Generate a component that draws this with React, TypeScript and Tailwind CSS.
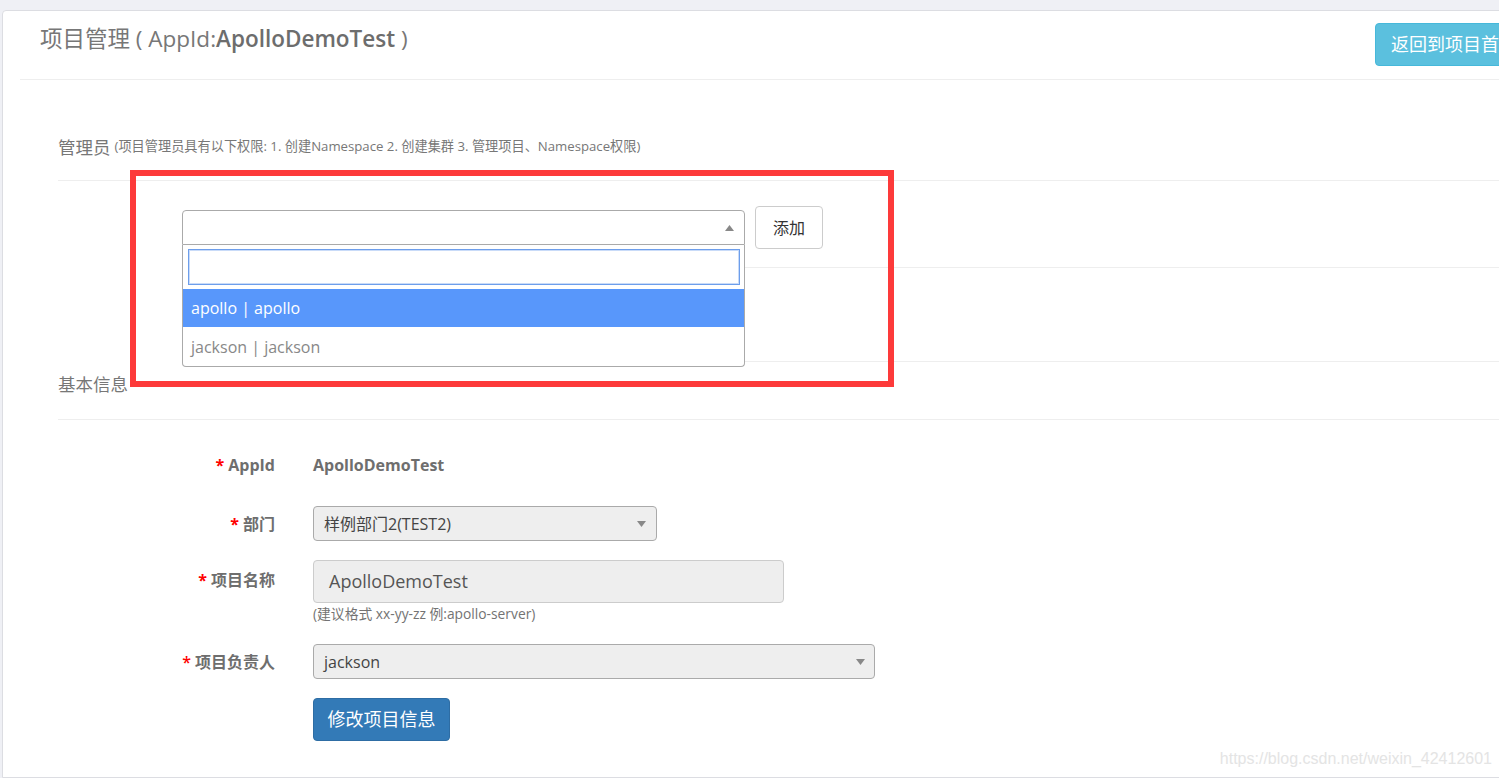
import React from "react";

const Caret = ({ up = false }: { up?: boolean }) => (
   <svg width="9" height="6" viewBox="0 0 9 6" className="shrink-0">
      {up ? (
         <path d="M0 6 L4.5 0 L9 6 Z" fill="#888" />
      ) : (
         <path d="M0 0 L9 0 L4.5 6 Z" fill="#888" />
      )}
   </svg>
);

function Label({ text, bold = true }: { text: string; bold?: boolean }) {
   return (
      <div
         className={`flex h-[22px] w-[217px] shrink-0 items-center justify-end text-[16px] text-[#6e6e6e] ${
            bold ? "font-bold" : "font-semibold"
         }`}
      >
         <span className="text-[#ff0000] mr-[4px]">*</span>
         {text}
      </div>
   );
}

export default function App() {
   return (
      <div className="relative h-screen w-full overflow-hidden bg-[#eff0f5] pt-[10px] pl-[2px] font-['Open_Sans','Noto_Sans_CJK_SC',sans-serif]">
         <div className="h-full w-[1580px] rounded-tl-[4px] border border-[#dcdde2] bg-white">
            {/* header */}
            <div className="ml-[17px] flex h-[69px] items-start border-b border-[#eeeeee] pl-[20px] pr-[46px]">
               <h1 className="mt-[12px] flex h-[32px] items-center whitespace-pre text-[22.5px] text-[#777]">
                  项目管理 ( AppId:
                  <span className="font-semibold text-[#6d6d6d]">ApolloDemoTest</span> )
               </h1>
               <div className="flex-1" />
               <button className="mt-[12px] h-[43px] w-[160px] rounded-[4px] border border-[#46b8da] bg-[#5bc0de] pl-[15px] text-left text-[18px] text-white">
                  返回到项目首页
               </button>
            </div>

            {/* 管理员 */}
            <div className="ml-[55px] border-b border-[#eeeeee] pt-[56px] pb-[22px] text-[#777]">
               <div className="flex h-[22px] items-center">
                  <span className="text-[17.5px]">管理员</span>
                  <span className="ml-[4px] text-[13.2px]">
                     (项目管理员具有以下权限: 1. 创建Namespace 2. 创建集群 3. 管理项目、Namespace权限)
                  </span>
               </div>
            </div>

            <div className="ml-[179px]">
               <div className="flex items-center gap-[10px] border-b border-[#eeeeee] pt-[25px] pb-[18px]">
                  <div className="relative">
                     <div className="flex h-[35px] w-[563px] items-center justify-end rounded-t-[4px] border border-[#aaa] bg-white pr-[10px]">
                        <Caret up />
                     </div>
                     <div className="absolute left-0 top-full z-10 w-[563px] rounded-b-[4px] border border-t-0 border-[#aaa] bg-white">
                        <div className="p-[4px] pl-[5px]">
                           <div className="h-[36px] w-full border border-[#6d9eeb] shadow-[inset_0_0_0_1px_#c9dbf8]" />
                        </div>
                        <div className="flex h-[38px] items-center bg-[#5897fb] pl-[8px] text-[16px] text-white">
                           apollo | apollo
                        </div>
                        <div className="flex h-[39px] items-center pl-[8px] text-[16px] text-[#888]">
                           jackson | jackson
                        </div>
                     </div>
                  </div>
                  <button className="h-[43px] w-[68px] rounded-[4px] border border-[#ccc] bg-white text-[16px] text-[#333]">
                     添加
                  </button>
               </div>
               <div className="h-[94px] border-b border-[#eeeeee]" />
            </div>

            {/* 基本信息 */}
            <div className="ml-[55px] border-b border-[#eeeeee] pt-[11px] pb-[24px] text-[#777]">
               <div className="flex h-[22px] items-center text-[17.5px]">基本信息</div>
            </div>

            <div className="ml-[55px] flex flex-col">
               <div className="mt-[34px] flex h-[22px] items-center">
                  <Label text="AppId" />
                  <div className="ml-[38px] text-[16px] font-bold text-[#6e6e6e]">
                     ApolloDemoTest
                  </div>
               </div>

               <div className="mt-[30px] flex h-[35px] items-center">
                  <Label text="部门" />
                  <div className="ml-[38px] flex h-[35px] w-[344px] items-center justify-between rounded-[4px] border border-[#aaa] bg-[#eeeeee] pl-[10px] pr-[10px]">
                     <span className="text-[16px] text-[#444]">样例部门2(TEST2)</span>
                     <Caret />
                  </div>
               </div>

               <div className="mt-[19px] flex h-[43px] items-start">
                  <div className="pt-[9px]">
                     <Label text="项目名称" />
                  </div>
                  <div className="ml-[38px] flex h-[43px] w-[471px] items-center rounded-[4px] border border-[#ccc] bg-[#eeeeee] pl-[15px] text-[18px] text-[#555]">
                     ApolloDemoTest
                  </div>
               </div>
               <div className="mt-[3px] ml-[255px] flex h-[17px] items-center text-[13.8px] text-[#737373]">
                  (建议格式 xx-yy-zz 例:apollo-server)
               </div>

               <div className="mt-[21px] flex h-[35px] items-center">
                  <Label text="项目负责人" bold={false} />
                  <div className="ml-[38px] flex h-[35px] w-[562px] items-center justify-between rounded-[4px] border border-[#aaa] bg-[#eeeeee] pl-[10px] pr-[9px]">
                     <span className="text-[16px] text-[#444]">jackson</span>
                     <Caret />
                  </div>
               </div>

               <div className="mt-[19px] flex">
                  <button className="ml-[255px] h-[43px] w-[137px] rounded-[4px] border border-[#2e6da4] bg-[#337ab7] text-[18px] text-white">
                     修改项目信息
                  </button>
               </div>
            </div>
         </div>

         {/* annotation */}
         <div className="pointer-events-none absolute left-[130px] top-[170px] h-[217px] w-[764px] border-[6px] border-[#fd3a3a]" />

         <div className="absolute bottom-[7px] right-[7px] font-['Liberation_Sans',sans-serif] text-[16px] text-[#e4e4e4]">
            https://blog.csdn.net/weixin_42412601
         </div>
      </div>
   );
}
